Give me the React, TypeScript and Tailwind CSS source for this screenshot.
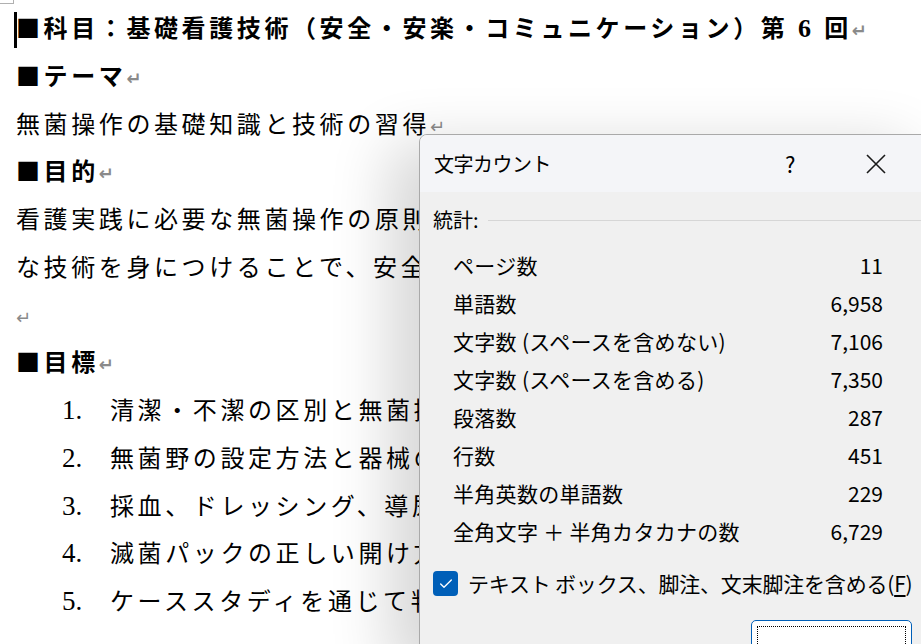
import { Check } from "lucide-react";

const docFont = { fontFamily: '"Liberation Serif", "Noto Sans CJK JP", serif' };
const uiFont = { fontFamily: '"Noto Sans CJK JP", "Noto Sans", sans-serif' };

function Ret() {
  return <span className="text-[18px] leading-none text-[#8a8a8a] tracking-normal" style={{ fontFamily: '"DejaVu Sans", sans-serif' }}>↵</span>;
}

function Sq() {
  return <span className="leading-none" style={{ fontFamily: '"Noto Sans CJK JP", sans-serif' }}>■</span>;
}

const stats = [
  { label: "ページ数", value: "11" },
  { label: "単語数", value: "6,958" },
  { label: "文字数 (スペースを含めない)", value: "7,106" },
  { label: "文字数 (スペースを含める)", value: "7,350" },
  { label: "段落数", value: "287" },
  { label: "行数", value: "451" },
  { label: "半角英数の単語数", value: "229" },
  { label: "全角文字 ＋ 半角カタカナの数", value: "6,729" },
];

const goals = [
  "清潔・不潔の区別と無菌操作の原則を理解する",
  "無菌野の設定方法と器械の取り扱いを習得する",
  "採血、ドレッシング、導尿などの場面での応用を学ぶ",
  "滅菌パックの正しい開け方を身につける",
  "ケーススタディを通じて判断力を養う",
];

export default function App() {
  return (
    <div className="relative w-[921px] h-[644px] overflow-hidden bg-white text-black">
      {/* page corner mark */}
      <div className="absolute left-0 top-[3px] w-[13px] h-px bg-[#b0b0b0]" />
      <div className="absolute left-[13px] top-0 w-px h-[4px] bg-[#b0b0b0]" />

      {/* Document */}
      <div className="pt-[6px] pl-[16px] text-[24px] leading-[47.75px] tracking-[3.6px] whitespace-nowrap" style={docFont}>
        <div className="relative h-[47.75px] font-bold">
          <span className="absolute left-[-2px] top-[6px] w-[3px] h-[36px] bg-black" />
          <Sq />科目：基礎看護技術（安全・安楽・コミュニケーション）第 <span className="text-[26px] leading-none">6</span> 回<Ret />
        </div>
        <div className="h-[47.75px] font-bold"><Sq />テーマ<Ret /></div>
        <div className="h-[47.75px]">無菌操作の基礎知識と技術の習得<Ret /></div>
        <div className="h-[47.75px] font-bold"><Sq />目的<Ret /></div>
        <div className="h-[47.75px] w-[403px] overflow-hidden">看護実践に必要な無菌操作の原則を理解し、</div>
        <div className="h-[47.75px] w-[403px] overflow-hidden">な技術を身につけることで、安全な看護を実践する</div>
        <div className="h-[47.75px]"><Ret /></div>
        <div className="h-[47.75px] font-bold"><Sq />目標<Ret /></div>
        {goals.map((g, i) => (
          <div key={i} className="h-[47.75px] w-[403px] overflow-hidden">
            <span className="inline-block w-[48px] ml-[46px] tracking-normal text-[27px] leading-none">{i + 1}.</span>
            <span>{g}</span>
          </div>
        ))}
      </div>

      {/* Word count dialog */}
      <div
        className="absolute left-[419px] top-[134px] w-[520px] h-[530px] rounded-tl-[8px] border border-[#a9a9a9] bg-[#f0f0f0] shadow-[-30px_10px_60px_rgba(0,0,0,0.16)] overflow-hidden"
        style={uiFont}
      >
        <div className="h-[57px] bg-[#f4f5f8] flex items-center pl-[14px]">
          <span className="text-[20px] tracking-[-0.5px]">文字カウント</span>
          <span className="ml-[234px] text-[22px]">?</span>
          <svg className="ml-[70px]" width="22" height="22" viewBox="0 0 22 22">
            <path d="M2 2 L20 20 M20 2 L2 20" stroke="#1a1a1a" strokeWidth="1.6" />
          </svg>
        </div>

        <div className="pl-[13px] pr-[8px]">
          <div className="flex items-center mt-[14px] h-[28px]">
            <span className="text-[20px]">統計:</span>
            <div className="flex-1 ml-[9px] h-px bg-[#d6d6d6]" />
          </div>

          <div className="mt-[13px] pl-[20px] w-[450px]">
            {stats.map((s) => (
              <div key={s.label} className="flex justify-between items-center h-[38px] text-[21px]">
                <span className="tracking-[0.3px]">{s.label}</span>
                <span>{s.value}</span>
              </div>
            ))}
          </div>

          <div className="flex items-center mt-[17px]">
            <span className="w-[25px] h-[25px] rounded-[4px] bg-[#005fb8] flex items-center justify-center">
              <Check className="w-[16px] h-[16px] text-white" strokeWidth={2} />
            </span>
            <span className="ml-[10px] text-[21px] tracking-[-0.2px]">
              テキスト ボックス、脚注、文末脚注を含める(<span className="underline underline-offset-[3px]">F</span>)
            </span>
          </div>

          <div className="flex justify-end mt-[20px] pr-[18px]">
            <div className="w-[161px] h-[40px] rounded-[5px] border border-[#005fb8] bg-white p-[5px]">
              <div className="w-full h-full border border-dotted border-black" />
            </div>
          </div>
        </div>
      </div>
    </div>
  );
}
